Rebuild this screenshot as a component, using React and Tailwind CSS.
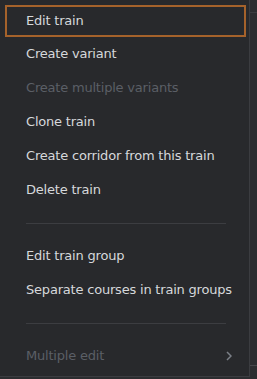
export default function App() {
  const font = { fontFamily: '"DejaVu Sans", sans-serif' };

  return (
    <div className="flex w-[257px] h-[379px] bg-[#2c2d30] overflow-hidden" style={font}>
      {/* Context menu */}
      <div className="flex flex-col w-[250px] h-[377px] shrink-0 pt-[5px] bg-[#28292c] border-r border-b border-[#3b3c40]">
        <div className="flex items-center h-[32px] ml-[5px] mr-[3px] pl-[19px] border-2 border-[#a5622b] text-[13px] tracking-[-0.2px] text-[#d6d8db] whitespace-nowrap">
          Edit train
        </div>
        <MenuItem label="Create variant" />
        <MenuItem label="Create multiple variants" disabled />
        <MenuItem label="Clone train" />
        <MenuItem label="Create corridor from this train" />
        <MenuItem label="Delete train" />
        <Separator />
        <MenuItem label="Edit train group" />
        <MenuItem label="Separate courses in train groups" />
        <Separator />
        <MenuItem label="Multiple edit" disabled submenu />
      </div>

      {/* Table behind the menu */}
      <div className="flex flex-col flex-1">
        <div className="h-[13px] border-b border-[#3b3c40]"></div>
        <div className="flex-1"></div>
        <div className="h-[14px] border-t border-[#46474b]"></div>
      </div>
    </div>
  );
}

function MenuItem({ label, disabled, submenu }) {
  return (
    <div
      className={`flex items-center justify-between h-[34px] ml-[5px] mr-[3px] pl-[21px] pr-[14px] text-[13px] tracking-[-0.2px] whitespace-nowrap ${
        disabled ? 'text-[#5b5f66]' : 'text-[#d6d8db]'
      }`}
    >
      <span>{label}</span>
      {submenu && (
        <svg width="6" height="10" viewBox="0 0 6 10" fill="none" stroke="#7c8088" strokeWidth="1.5">
          <path d="M1 1l4 4-4 4" />
        </svg>
      )}
    </div>
  );
}

function Separator() {
  return (
    <div className="flex items-center h-[32px] pl-[26px] pr-[23px]">
      <div className="w-full h-px bg-[#3c3d41]"></div>
    </div>
  );
}
